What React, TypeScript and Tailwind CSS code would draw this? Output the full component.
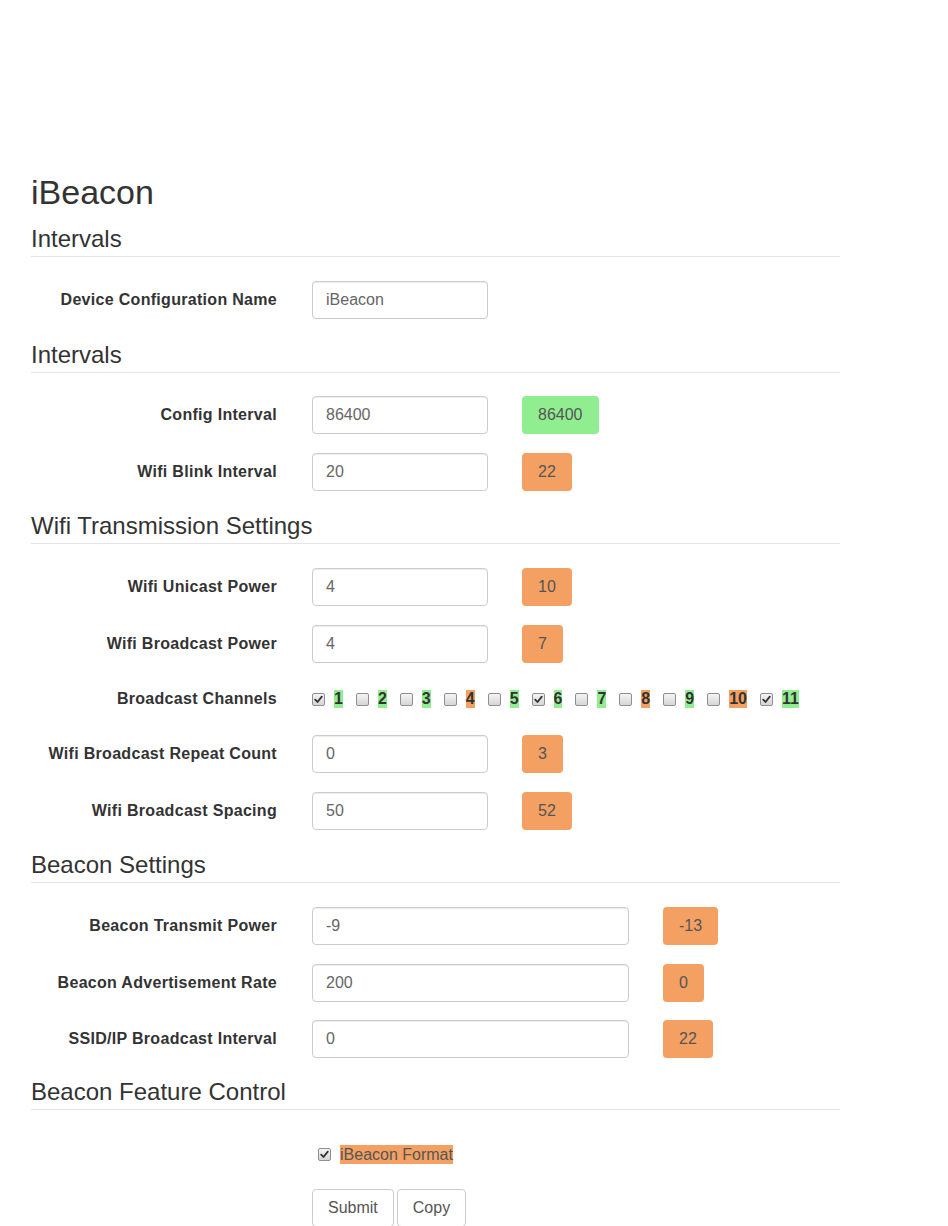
import React from "react";

const FONT = { fontFamily: '"Liberation Sans", Arial, Helvetica, sans-serif' };

function Check({ checked }: { checked: boolean }) {
  return (
    <span className="inline-flex h-[13px] w-[13px] shrink-0 items-center justify-center rounded-[2px] border border-[#8e8f8f] bg-gradient-to-b from-[#f4f4f4] to-[#d6d6d6]">
      {checked ? (
        <svg width="9" height="9" viewBox="0 0 9 9">
          <path d="M1.2 4.6 L3.5 7 L7.8 1.6" fill="none" stroke="#333" strokeWidth="1.8" strokeLinecap="round" strokeLinejoin="round" />
        </svg>
      ) : null}
    </span>
  );
}

function Header({ title, className }: { title: string; className: string }) {
  return (
    <div className={"w-[809px] border-b border-[#e6e6e6] pb-[4px] " + className}>
      <h3 className="text-[24px] leading-[26px] text-[#333]">{title}</h3>
    </div>
  );
}

function Badge({ value, color }: { value: string; color: "green" | "orange" }) {
  return (
    <span
      className={
        "flex h-[38px] items-center rounded-[4px] px-[16px] text-[16px] text-[#555] " +
        (color === "green" ? "bg-[#90ee90]" : "bg-[#f4a062]")
      }
    >
      {value}
    </span>
  );
}

function Row({
  label,
  value,
  badge,
  color,
  wide,
  className,
}: {
  label: string;
  value: string;
  badge?: string;
  color?: "green" | "orange";
  wide?: boolean;
  className: string;
}) {
  return (
    <div className={"flex h-[38px] items-center " + className}>
      <div className="w-[246px] text-right text-[16px] font-bold tracking-[0.3px] text-[#333]">{label}</div>
      <div
        className={
          "ml-[35px] flex h-[38px] items-center rounded-[4px] border border-[#cccccc] bg-white pl-[13px] text-[16px] text-[#666] shadow-[inset_0_1px_1px_rgba(0,0,0,0.075)] " +
          (wide ? "w-[317px]" : "w-[176px]")
        }
      >
        {value}
      </div>
      {badge !== undefined ? (
        <div className="ml-[34px]">
          <Badge value={badge} color={color ?? "orange"} />
        </div>
      ) : null}
    </div>
  );
}

const channels: { n: string; checked: boolean; color: "green" | "orange" }[] = [
  { n: "1", checked: true, color: "green" },
  { n: "2", checked: false, color: "green" },
  { n: "3", checked: false, color: "green" },
  { n: "4", checked: false, color: "orange" },
  { n: "5", checked: false, color: "green" },
  { n: "6", checked: true, color: "green" },
  { n: "7", checked: false, color: "green" },
  { n: "8", checked: false, color: "orange" },
  { n: "9", checked: false, color: "green" },
  { n: "10", checked: false, color: "orange" },
  { n: "11", checked: true, color: "green" },
];

export default function App() {
  return (
    <div className="min-h-[1226px] w-[948px] bg-white" style={FONT}>
      <div className="pl-[31px] pt-[173px]">
        <h1 className="text-[34px] leading-[38px] text-[#333]">iBeacon</h1>

        <Header title="Intervals" className="mt-[15px]" />
        <Row label="Device Configuration Name" value="iBeacon" className="mt-[24px]" />

        <Header title="Intervals" className="mt-[23px]" />
        <Row label="Config Interval" value="86400" badge="86400" color="green" className="mt-[23px]" />
        <Row label="Wifi Blink Interval" value="20" badge="22" className="mt-[19px]" />

        <Header title="Wifi Transmission Settings" className="mt-[22px]" />
        <Row label="Wifi Unicast Power" value="4" badge="10" className="mt-[24px]" />
        <Row label="Wifi Broadcast Power" value="4" badge="7" className="mt-[19px]" />

        <div className="mt-[19px] flex h-[34px] items-center">
          <div className="w-[246px] text-right text-[16px] font-bold tracking-[0.3px] text-[#333]">Broadcast Channels</div>
          <div className="ml-[35px] flex items-center">
            {channels.map((c) => (
              <div key={c.n} className="flex items-center">
                <Check checked={c.checked} />
                <span
                  className={
                    "ml-[9px] mr-[13px] text-[16px] font-bold leading-[18px] text-[#333] " +
                    (c.color === "green" ? "bg-[#90ee90]" : "bg-[#f4a062]")
                  }
                >
                  {c.n}
                </span>
              </div>
            ))}
          </div>
        </div>

        <Row label="Wifi Broadcast Repeat Count" value="0" badge="3" className="mt-[19px]" />
        <Row label="Wifi Broadcast Spacing" value="50" badge="52" className="mt-[19px]" />

        <Header title="Beacon Settings" className="mt-[22px]" />
        <Row label="Beacon Transmit Power" value="-9" badge="-13" wide className="mt-[24px]" />
        <Row label="Beacon Advertisement Rate" value="200" badge="0" wide className="mt-[19px]" />
        <Row label="SSID/IP Broadcast Interval" value="0" badge="22" wide className="mt-[18px]" />

        <Header title="Beacon Feature Control" className="mt-[21px]" />
        <div className="mt-[25px] flex h-[38px] items-center pl-[287px]">
          <Check checked={true} />
          <span className="ml-[9px] bg-[#f4a062] text-[16px] leading-[19px] text-[#555]">iBeacon Format</span>
        </div>

        <div className="mt-[16px] flex gap-[3px] pl-[281px]">
          <button className="h-[38px] rounded-[4px] border border-[#cccccc] bg-white px-[15px] text-[16px] text-[#555]">
            Submit
          </button>
          <button className="h-[38px] rounded-[4px] border border-[#cccccc] bg-white px-[15px] text-[16px] text-[#555]">
            Copy
          </button>
        </div>
      </div>
    </div>
  );
}
